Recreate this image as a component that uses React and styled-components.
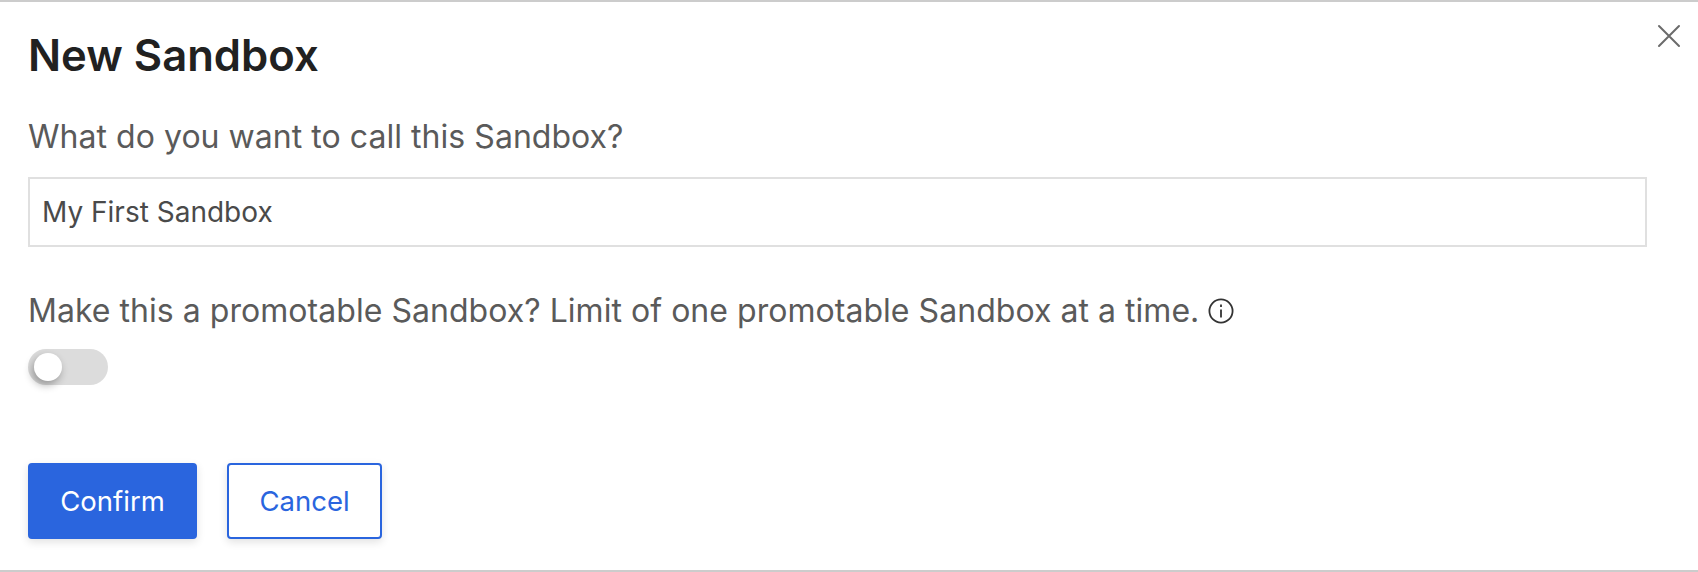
import React from "react";
import styled, { createGlobalStyle } from "styled-components";

const Global = createGlobalStyle`
  html, body { margin: 0; padding: 0; background: #fff; }
  body { font-family: Inter, "Liberation Sans", sans-serif; }
`;

const Dialog = styled.div`
  position: relative;
  box-sizing: border-box;
  width: 1698px;
  height: 572px;
  background: #fff;
  border-top: 2px solid #ccc;
  border-bottom: 2px solid #ccc;
  padding: 28px 51px 0 28px;
  display: flex;
  flex-direction: column;
`;

const Close = styled.button`
  position: absolute;
  top: 21px;
  right: 16px;
  width: 26px;
  height: 26px;
  padding: 0;
  border: 0;
  background: none;
  display: block;
`;

const Title = styled.h1`
  margin: 0;
  font-size: 43.6px;
  line-height: 52px;
  font-weight: 600;
  color: #212121;
`;

const Label = styled.div`
  font-size: 32px;
  line-height: 40px;
  font-weight: 400;
  letter-spacing: 0.04px;
  color: #5a5a5a;
  display: flex;
  align-items: center;
  gap: 9px;
`;

const FirstLabel = styled(Label)`
  margin-top: 35px;
`;

const Field = styled.input`
  box-sizing: border-box;
  width: 100%;
  height: 70px;
  margin-top: 20px;
  border: 2px solid #e0e0e0;
  padding: 0 12px;
  font: 400 28px Inter, sans-serif;
  color: #4a4a4a;
  outline: none;
`;

const SecondLabel = styled(Label)`
  margin-top: 44px;
`;

const Track = styled.div`
  position: relative;
  width: 80px;
  height: 36px;
  margin-top: 18px;
  border-radius: 18px;
  background: #dcdcdc;
`;

const Knob = styled.div`
  position: absolute;
  top: 4px;
  left: 6px;
  width: 28px;
  height: 28px;
  border-radius: 50%;
  background: #fff;
  box-shadow: -2px 4px 9px rgba(0, 0, 0, 0.32);
`;

const Actions = styled.div`
  display: flex;
  gap: 30px;
  margin-top: 78px;
`;

const Button = styled.button`
  box-sizing: border-box;
  height: 76px;
  width: ${(p) => p.$w}px;
  border-radius: 4px;
  font: 400 27.5px Inter, sans-serif;
  border: 2px solid #2a65de;
  background: ${(p) => (p.$primary ? "#2a65de" : "#fff")};
  color: ${(p) => (p.$primary ? "#fff" : "#2a65de")};
  box-shadow: 0 3px 8px rgba(0, 0, 0, 0.12);
  padding: 0;
`;

export default function App() {
  return (
    <>
      <Global />
      <Dialog>
        <Close aria-label="Close">
          <svg width="26" height="26" viewBox="0 0 26 26" fill="none" stroke="#6b6b6b" strokeWidth="2" strokeLinecap="round">
            <path d="M3 3 L23 23 M23 3 L3 23" />
          </svg>
        </Close>
        <Title>New Sandbox</Title>
        <FirstLabel>What do you want to call this Sandbox?</FirstLabel>
        <Field defaultValue="My First Sandbox" />
        <SecondLabel>
          Make this a promotable Sandbox? Limit of one promotable Sandbox at a time.
          <svg width="26" height="26" viewBox="0 0 26 26" fill="none" stroke="#333" strokeWidth="1.8">
            <circle cx="13" cy="13" r="11.6" />
            <path d="M13 11.5 V19.5" />
            <path d="M13 6.5 V9" />
          </svg>
        </SecondLabel>
        <Track><Knob /></Track>
        <Actions>
          <Button $primary $w={169}>Confirm</Button>
          <Button $w={155}>Cancel</Button>
        </Actions>
      </Dialog>
    </>
  );
}
